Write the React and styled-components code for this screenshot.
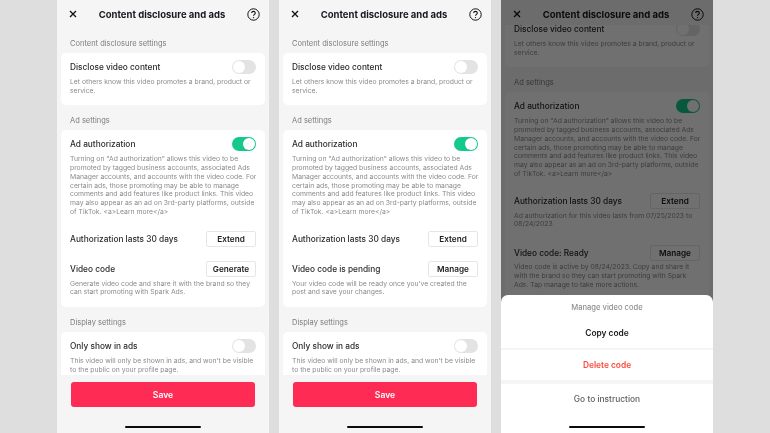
import React from "react";
import styled, { createGlobalStyle } from "styled-components";

const GlobalStyle = createGlobalStyle`
  html, body {
    margin: 0;
    padding: 0;
    background: #dedede;
    font-family: "Inter", "Liberation Sans", sans-serif;
  }
`;

const Page = styled.div`
  width: 770px;
  height: 433px;
  display: flex;
  gap: 10px;
  padding-left: 57px;
  box-sizing: border-box;
  overflow: hidden;
  will-change: transform;
`;

const Screen = styled.div`
  position: relative;
  width: 212px;
  height: 433px;
  background: #f5f5f5;
  display: flex;
  flex-direction: column;
  overflow: hidden;
`;

const Header = styled.div`
  height: ${(p) => (p.$short ? 25 : 28)}px;
  flex-shrink: 0;
  display: flex;
  align-items: center;
  justify-content: space-between;
  padding: ${(p) => (p.$short ? 3 : 0)}px 9px 0 12px;
  box-sizing: border-box;
`;

const Title = styled.div`
  font-size: 9.5px;
  font-weight: 700;
  color: #16181f;
  white-space: nowrap;
`;

const Scroll = styled.div`
  flex: 1;
  min-height: 0;
  overflow: hidden;
`;

const ScrollInner = styled.div`
  margin-top: ${(p) => p.$offset || 0}px;
  padding: 0 4px;
`;

const SectionTitle = styled.div`
  font-size: 7.5px;
  line-height: 10px;
  color: #7b7c80;
  padding: 11px 9px 4px;
`;

const Card = styled.div`
  background: #fff;
  border-radius: 5px;
  padding: 7px 9px 10px;
`;

const Row = styled.div`
  display: flex;
  align-items: center;
  justify-content: space-between;
  min-height: ${(p) => p.$height || 14}px;
  margin-top: ${(p) => p.$top || 0}px;
`;

const Label = styled.div`
  font-size: 8.3px;
  font-weight: 500;
  color: #2a2b30;
  white-space: nowrap;
`;

const Desc = styled.div`
  font-size: 6.8px;
  line-height: 8.7px;
  color: #8a8b8f;
  margin-top: ${(p) => p.$top || 4}px;
  margin-right: ${(p) => (p.$wide ? -3 : 0)}px;
`;

const SmallButton = styled.div`
  width: 50px;
  height: 16px;
  background: #fff;
  border: 1px solid #e6e6e6;
  border-radius: 2px;
  box-sizing: border-box;
  display: flex;
  align-items: center;
  justify-content: center;
  font-size: 8.2px;
  font-weight: 600;
  color: #1b1c21;
`;

const Track = styled.div`
  width: 24px;
  height: 14px;
  border-radius: 7px;
  background: ${(p) => (p.$on ? "#14c98b" : "#e3e3e3")};
  display: flex;
  justify-content: ${(p) => (p.$on ? "flex-end" : "flex-start")};
  align-items: center;
  padding: 0 1px;
  box-sizing: border-box;
`;

const Knob = styled.div`
  width: 12px;
  height: 12px;
  border-radius: 50%;
  background: #fff;
`;

const Footer = styled.div`
  flex-shrink: 0;
  height: 58px;
  padding: 7px 14px 0;
  box-sizing: border-box;
  background: #f5f5f5;
`;

const SaveButton = styled.div`
  height: 25px;
  border-radius: 3px;
  background: #fe2c55;
  color: #fff;
  font-size: 8.6px;
  font-weight: 600;
  display: flex;
  align-items: center;
  justify-content: center;
`;

const HomeBar = styled.div`
  position: absolute;
  left: 50%;
  bottom: 5px;
  width: 76px;
  height: 2.5px;
  margin-left: -38px;
  border-radius: 2px;
  background: #0b0b0b;
  z-index: 5;
`;

const Dim = styled.div`
  position: absolute;
  inset: 0;
  background: rgba(0, 0, 0, 0.56);
  z-index: 2;
`;

const Sheet = styled.div`
  position: absolute;
  left: 0;
  right: 0;
  bottom: 0;
  height: 138px;
  background: #fff;
  border-radius: 7px 7px 0 0;
  z-index: 3;
  display: flex;
  flex-direction: column;
`;

const SheetTitle = styled.div`
  text-align: center;
  font-size: 7.6px;
  font-weight: 500;
  color: #8f9094;
  padding: 8px 0 5px;
  line-height: 10px;
`;

const SheetItem = styled.div`
  display: flex;
  align-items: center;
  justify-content: center;
  height: 30px;
  font-size: 8.4px;
  font-weight: ${(p) => p.$weight || 600};
  color: ${(p) => p.$color || "#1a1b20"};
  border-bottom: ${(p) => (p.$thick ? `${p.$thick}px solid #f5f5f5` : "none")};
  flex-shrink: 0;
`;

const CloseIcon = () => (
  <svg width="8" height="8" viewBox="0 0 8 8" fill="none" stroke="#111" strokeWidth="1.3">
    <path d="M1 1l6 6M7 1l-6 6" />
  </svg>
);

const HelpIcon = () => (
  <svg width="13" height="13" viewBox="0 0 13 13" fill="none" stroke="#111" strokeWidth="1">
    <circle cx="6.5" cy="6.5" r="5.7" />
    <path d="M4.7 5.1c0-1 .8-1.7 1.8-1.7s1.8.7 1.8 1.6c0 1.4-1.8 1.3-1.8 2.8" strokeWidth="1.1" />
    <circle cx="6.5" cy="9.6" r=".7" fill="#111" stroke="none" />
  </svg>
);

const Toggle = ({ on }) => (
  <Track $on={on}>
    <Knob />
  </Track>
);

const TopBar = ({ short }) => (
  <Header $short={short}>
    <CloseIcon />
    <Title>Content disclosure and ads</Title>
    <HelpIcon />
  </Header>
);

const AD_TEXT =
  'Turning on "Ad authorization" allows this video to be promoted by tagged business accounts, associated Ads Manager accounts, and accounts with the video code. For certain ads, those promoting may be able to manage comments and add features like product links. This video may also appear as an ad on 3rd-party platforms, outside of TikTok. <a>Learn more</a>';

const Settings = ({ authDesc, code, codeDesc, codeAction, scrolled }) => (
  <ScrollInner $offset={scrolled ? -10 : 0}>
    {!scrolled && <SectionTitle>Content disclosure settings</SectionTitle>}
    <Card>
      <Row>
        <Label>Disclose video content</Label>
        <Toggle />
      </Row>
      <Desc>Let others know this video promotes a brand, product or service.</Desc>
    </Card>
    <SectionTitle>Ad settings</SectionTitle>
    <Card>
      <Row>
        <Label>Ad authorization</Label>
        <Toggle on />
      </Row>
      <Desc $wide>{AD_TEXT}</Desc>
      <Row $height={16} $top={15}>
        <Label>Authorization lasts 30 days</Label>
        <SmallButton>Extend</SmallButton>
      </Row>
      {authDesc && <Desc $top={2.3}>{authDesc}</Desc>}
      <Row $height={16} $top={authDesc ? 16 : 14}>
        <Label>{code}</Label>
        <SmallButton>{codeAction}</SmallButton>
      </Row>
      <Desc $top={2.3}>{codeDesc}</Desc>
    </Card>
    {!scrolled && (
      <>
        <SectionTitle>Display settings</SectionTitle>
        <Card>
          <Row>
            <Label>Only show in ads</Label>
            <Toggle />
          </Row>
          <Desc>This video will only be shown in ads, and won't be visible to the public on your profile page.</Desc>
        </Card>
      </>
    )}
  </ScrollInner>
);

export default function App() {
  return (
    <>
      <GlobalStyle />
      <Page>
        <Screen>
          <TopBar />
          <Scroll>
            <Settings
              code="Video code"
              codeAction="Generate"
              codeDesc="Generate video code and share it with the brand so they can start promoting with Spark Ads."
            />
          </Scroll>
          <Footer>
            <SaveButton>Save</SaveButton>
          </Footer>
          <HomeBar />
        </Screen>

        <Screen>
          <TopBar />
          <Scroll>
            <Settings
              code="Video code is pending"
              codeAction="Manage"
              codeDesc="Your video code will be ready once you've created the post and save your changes."
            />
          </Scroll>
          <Footer>
            <SaveButton>Save</SaveButton>
          </Footer>
          <HomeBar />
        </Screen>

        <Screen>
          <TopBar short />
          <Scroll>
            <Settings
              scrolled
              authDesc="Ad authorization for this video lasts from 07/25/2023 to 08/24/2023"
              code="Video code: Ready"
              codeAction="Manage"
              codeDesc="Video code is active by 08/24/2023. Copy and share it with the brand so they can start promoting with Spark Ads. Tap manage to take more actions."
            />
          </Scroll>
          <Dim />
          <Sheet>
            <SheetTitle>Manage video code</SheetTitle>
            <SheetItem $thick={2}>Copy code</SheetItem>
            <SheetItem $thick={4} $color="#fe4a3c">Delete code</SheetItem>
            <SheetItem $color="#5c5d62" $weight={500}>Go to instruction</SheetItem>
          </Sheet>
          <HomeBar />
        </Screen>
      </Page>
    </>
  );
}
